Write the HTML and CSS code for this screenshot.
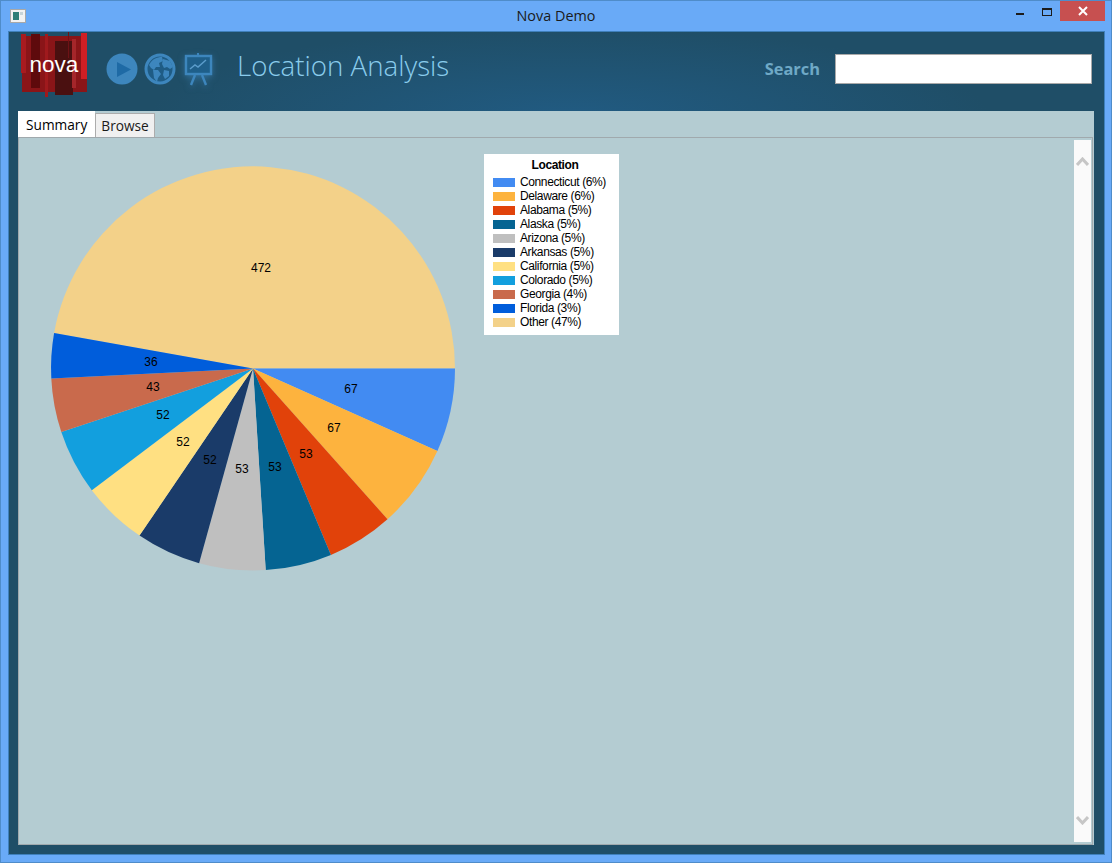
FILE: index.html
```html
<!DOCTYPE html>
<html lang="en">
<head>
  <meta charset="UTF-8" />
  <title>Nova Demo</title>
  <link rel="stylesheet" href="styles.css">
</head>
<body>
  <div class="window">
    <div class="titlebar">
      <svg class="app-icon" width="16" height="14" viewBox="0 0 16 14">
        <rect x="0.5" y="0.5" width="15" height="13" fill="#f2f2f2" stroke="#a8a8a8"/>
        <rect x="3" y="3" width="6" height="8" fill="#2f7f78"/>
        <rect x="10" y="3" width="3" height="3" fill="#c8d4d8"/>
      </svg>
      <span class="window-title">Nova Demo</span>
      <div class="window-btns">
        <div class="win-btn"><span class="win-min"></span></div>
        <div class="win-btn"><span class="win-max"></span></div>
        <div class="win-close">
          <svg width="10" height="10" viewBox="0 0 10 10"><path d="M1 1 L9 9 M9 1 L1 9" stroke="#fff" stroke-width="2"/></svg>
        </div>
      </div>
    </div>

    <div class="app">
      <div class="header">
        <svg class="logo" width="70" height="66" viewBox="0 0 70 66">
          <rect x="2" y="4" width="65" height="56" fill="#8a1518"/>
          <rect x="1" y="2" width="5" height="39" fill="#a81b1f"/>
          <rect x="11" y="2" width="9" height="54" fill="#5e0a0c"/>
          <rect x="25" y="2" width="3" height="63" fill="#a01a1d"/>
          <rect x="35" y="9" width="18" height="54" fill="#4a1010"/>
          <rect x="52" y="7" width="4" height="49" fill="#a5262a"/>
          <rect x="48" y="0" width="1" height="26" fill="#6e1216"/>
          <rect x="61" y="1" width="6" height="46" fill="#d01f24"/>
          <text x="34" y="40" class="logo-text" text-anchor="middle">nova</text>
        </svg>

        <svg class="nav-icon" width="32" height="32" viewBox="0 0 32 32">
          <circle cx="16" cy="16" r="15.5" fill="#3d86bd"/>
          <path d="M11 9 L25 16.5 L11 24 Z" fill="#1e6aa5"/>
        </svg>
        <svg class="nav-icon" width="32" height="32" viewBox="0 0 32 32">
          <circle cx="16" cy="16" r="14" fill="#1f5c85" stroke="#3d86bd" stroke-width="3"/>
          <path d="M5 12 C8 6 13 4 18 4 L19 8 L15 10 L16 14 L12 14 L10 17 L7 15 Z" fill="#3d86bd"/>
          <path d="M9 17 L14 17 L17 21 L14 25 L13 29 L10 25 Z" fill="#3d86bd"/>
          <path d="M19 6 L26 8 L29 14 L26 16 L23 14 L20 15 L18 11 Z" fill="#3d86bd"/>
          <path d="M20 17 L25 18 L25 23 L21 26 L19 22 Z" fill="#3d86bd"/>
        </svg>
        <svg class="nav-icon board" width="30" height="34" viewBox="0 0 30 34">
          <path d="M14 1 V4" stroke="#3d86bd" stroke-width="2"/>
          <rect x="2" y="4" width="25" height="18" fill="#1f5f8a" stroke="#3d86bd" stroke-width="2.4"/>
          <path d="M6 17 L11 13 L14 15 L22 8" fill="none" stroke="#5b9ccb" stroke-width="1.5"/>
          <path d="M11 23 L7 33 M18 23 L22 33" stroke="#3d86bd" stroke-width="2.4"/>
        </svg>

        <h1 class="page-title">Location Analysis</h1>

        <label class="search-label" for="search">Search</label>
        <input class="search-box" id="search" type="text" />
      </div>

      <div class="panel">
        <div class="tabs">
          <div class="tab active">Summary</div>
          <div class="tab">Browse</div>
        </div>
        <div class="tab-body">
          <div class="chart">
            <svg class="pie" width="455" height="440" viewBox="19 138 455 440">
              <path fill="#f3d189" d="M253 368.5 L54.1 333.1 A202 202 0 0 1 455 368.5 Z"/>
              <path fill="#428bf2" d="M253 368.5 L455 368.5 A202 202 0 0 1 437.4 451 Z"/>
              <path fill="#fdb33e" d="M253 368.5 L437.4 451 A202 202 0 0 1 387.5 519.2 Z"/>
              <path fill="#e1420a" d="M253 368.5 L387.5 519.2 A202 202 0 0 1 330.9 554.9 Z"/>
              <path fill="#056492" d="M253 368.5 L330.9 554.9 A202 202 0 0 1 265.7 570.1 Z"/>
              <path fill="#bfbfbf" d="M253 368.5 L265.7 570.1 A202 202 0 0 1 199.1 563.2 Z"/>
              <path fill="#1a3b69" d="M253 368.5 L199.1 563.2 A202 202 0 0 1 139.5 535.6 Z"/>
              <path fill="#ffe082" d="M253 368.5 L139.5 535.6 A202 202 0 0 1 91.8 490.3 Z"/>
              <path fill="#129fde" d="M253 368.5 L91.8 490.3 A202 202 0 0 1 61.3 432.1 Z"/>
              <path fill="#c96a4c" d="M253 368.5 L61.3 432.1 A202 202 0 0 1 51.3 378.6 Z"/>
              <path fill="#005ddb" d="M253 368.5 L51.3 378.6 A202 202 0 0 1 54.1 333.1 Z"/>
              <g class="pie-labels" text-anchor="middle">
                <text x="261" y="272">472</text>
                <text x="351" y="393">67</text>
                <text x="334" y="432">67</text>
                <text x="306" y="458">53</text>
                <text x="275" y="471">53</text>
                <text x="242" y="473">53</text>
                <text x="210" y="464">52</text>
                <text x="183" y="446">52</text>
                <text x="163" y="419">52</text>
                <text x="153" y="391">43</text>
                <text x="151" y="366">36</text>
              </g>
            </svg>

            <div class="legend">
              <div class="legend-title">Location</div>
              <div class="legend-row"><span class="swatch c1"></span>Connecticut (6%)</div>
              <div class="legend-row"><span class="swatch c2"></span>Delaware (6%)</div>
              <div class="legend-row"><span class="swatch c3"></span>Alabama (5%)</div>
              <div class="legend-row"><span class="swatch c4"></span>Alaska (5%)</div>
              <div class="legend-row"><span class="swatch c5"></span>Arizona (5%)</div>
              <div class="legend-row"><span class="swatch c6"></span>Arkansas (5%)</div>
              <div class="legend-row"><span class="swatch c7"></span>California (5%)</div>
              <div class="legend-row"><span class="swatch c8"></span>Colorado (5%)</div>
              <div class="legend-row"><span class="swatch c9"></span>Georgia (4%)</div>
              <div class="legend-row"><span class="swatch c10"></span>Florida (3%)</div>
              <div class="legend-row"><span class="swatch c11"></span>Other (47%)</div>
            </div>
          </div>

          <div class="scrollbar">
            <svg width="13" height="9" viewBox="0 0 13 9"><path d="M1 8 L6.5 2 L12 8" fill="none" stroke="#c6c6c6" stroke-width="3"/></svg>
            <svg width="13" height="9" viewBox="0 0 13 9"><path d="M1 1 L6.5 7 L12 1" fill="none" stroke="#c6c6c6" stroke-width="3"/></svg>
          </div>
        </div>
      </div>
    </div>
  </div>
</body>
</html>
```

FILE: styles.css
```css
html, body {
    margin: 0;
    padding: 0;
}
body {
    width: 1112px;
    height: 863px;
    overflow: hidden;
    font-family: "Open Sans", "Liberation Sans", sans-serif;
}
.window {
    box-sizing: border-box;
    width: 1112px;
    height: 863px;
    display: flex;
    flex-direction: column;
    background-color: #69aaf7;
    border: 1px solid #4f8cc9;
}

/* title bar */
.titlebar {
    height: 30px;
    flex: none;
    display: flex;
    position: relative;
    align-items: flex-start;
}
.app-icon {
    margin: 8px 0 0 9px;
}
.window-title {
    position: absolute;
    left: 0;
    right: 0;
    top: 5px;
    text-align: center;
    font-size: 14.4px;
    line-height: 20px;
    color: #1a1a1a;
}
.window-btns {
    margin-left: auto;
    margin-right: 6px;
    display: flex;
    position: relative;
}
.win-btn {
    width: 26px;
    height: 20px;
    display: flex;
    align-items: center;
    justify-content: center;
}
.win-min {
    width: 8px;
    height: 2px;
    margin: 6px 0 0 -2px;
    background-color: #1c1c1c;
}
.win-max {
    box-sizing: border-box;
    width: 10px;
    height: 8px;
    margin-top: 2px;
    border: 1px solid #1c1c1c;
    border-top-width: 2px;
}
.win-close {
    width: 45px;
    height: 20px;
    background-color: #c75050;
    display: flex;
    align-items: center;
    justify-content: center;
}

/* app area */
.app {
    flex: none;
    box-sizing: border-box;
    width: 1097px;
    height: 824px;
    margin-left: 7px;
    padding: 0 10px 9px 9px;
    display: flex;
    flex-direction: column;
    background: radial-gradient(ellipse 420px 90px at 560px 85px, #215b82, #1f4e67);
    border: 1px solid #3f80bb;
}
.header {
    box-sizing: border-box;
    height: 79px;
    padding-bottom: 6px;
    flex: none;
    display: flex;
    align-items: center;
    position: relative;
}
.logo {
    margin: -7px 0 0 2px;
}
.nav-icon {
    margin-left: 6px;
}
.logo + .nav-icon {
    margin-left: 16px;
}
.board {
    margin-left: 8px;
    filter: drop-shadow(0 2px 3px rgba(61, 134, 189, 0.6));
}
.logo-text {
    font-family: "Liberation Sans", sans-serif;
    font-size: 22.5px;
    fill: #fff;
}
.page-title {
    margin: -7px 0 0 23px;
    font-size: 27.7px;
    font-weight: 300;
    color: #8accec;
}
.search-label {
    margin: 0 15px 0 auto;
    font-size: 16.4px;
    font-weight: 700;
    color: #6fa9c6;
}
.search-box {
    box-sizing: border-box;
    width: 257px;
    height: 30px;
    margin-right: 2px;
    background-color: #fff;
    border: 1px solid #a9a9a9;
    border-radius: 0;
    outline: none;
}

/* tabbed panel */
.panel {
    flex: 1;
    min-height: 0;
    width: 1076px;
    display: flex;
    flex-direction: column;
    background-color: #b4ccd2;
}
.tabs {
    display: flex;
    align-items: flex-end;
    height: 26px;
    flex: none;
}
.tab {
    box-sizing: border-box;
    height: 24px;
    padding: 0 5px;
    font-size: 13.7px;
    line-height: 24px;
    color: #1a1a1a;
    background-color: #f0f0f0;
    border: 1px solid #acacac;
    border-bottom: none;
}
.tab.active {
    height: 26px;
    padding: 0 8px;
    line-height: 27px;
    color: #000;
    background-color: #fff;
    border: none;
}
.tab-body {
    flex: 1;
    min-height: 0;
    width: 1075px;
    box-sizing: border-box;
    padding: 2px 1px 2px 2px;
    display: flex;
    border: 1px solid #a0a9ad;
}
.chart {
    flex: 1;
    display: flex;
    align-items: flex-start;
    margin-left: -2px;
    margin-top: -2px;
}
.pie {
    flex: none;
}
.pie-labels text {
    font-family: "Liberation Sans", sans-serif;
    font-size: 12px;
    fill: #000;
}
.legend {
    box-sizing: border-box;
    width: 135px;
    height: 181px;
    margin: 16px 0 0 10px;
    padding: 4px 9px 0 9px;
    background-color: #fff;
    font-family: "Liberation Sans", sans-serif;
    font-size: 12px;
    letter-spacing: -0.38px;
    color: #000;
}
.legend-title {
    height: 17px;
    padding-left: 7px;
    line-height: 14px;
    font-weight: 700;
    text-align: center;
}
.legend-row {
    display: flex;
    align-items: center;
    height: 14px;
    white-space: nowrap;
}
.swatch {
    width: 22px;
    height: 9px;
    margin-right: 5px;
    flex: none;
}
.c1 { background-color: #428bf2; }
.c2 { background-color: #fdb33e; }
.c3 { background-color: #e1420a; }
.c4 { background-color: #056492; }
.c5 { background-color: #bfbfbf; }
.c6 { background-color: #1a3b69; }
.c7 { background-color: #ffe082; }
.c8 { background-color: #129fde; }
.c9 { background-color: #c96a4c; }
.c10 { background-color: #005ddb; }
.c11 { background-color: #f3d189; }

.scrollbar {
    width: 17px;
    flex: none;
    display: flex;
    flex-direction: column;
    justify-content: space-between;
    align-items: center;
    padding: 17px 0 17px;
    box-sizing: border-box;
    background-color: #fafafa;
}
```
